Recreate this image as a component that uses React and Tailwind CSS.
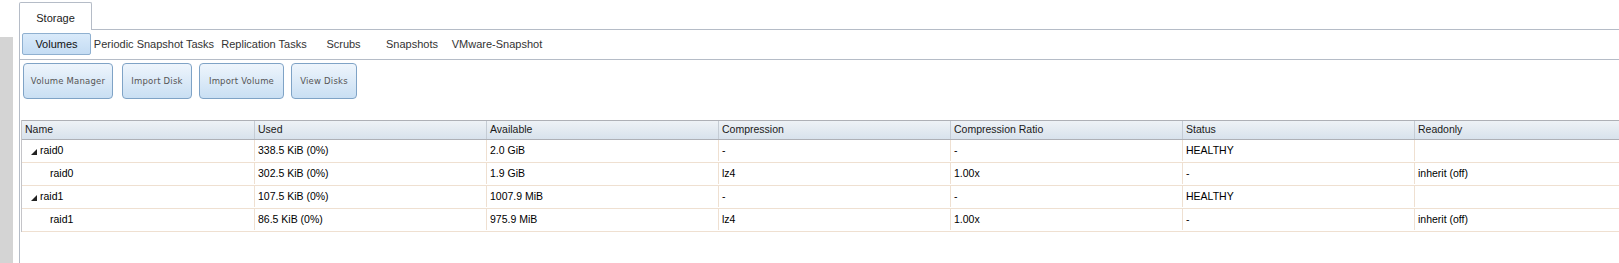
import React from 'react';

const subTabs = [
  { label: 'Volumes', w: 'w-[69px]', active: true },
  { label: 'Periodic Snapshot Tasks', w: 'w-[124px]' },
  { label: 'Replication Tasks', w: 'w-[94px]' },
  { label: 'Scrubs', w: 'w-[63px]' },
  { label: 'Snapshots', w: 'w-[72px]' },
  { label: 'VMware-Snapshot', w: 'w-[96px]' },
];

const actions = [
  { label: 'Volume Manager', w: 'w-[90px]', ml: 'ml-0' },
  { label: 'Import Disk', w: 'w-[70px]', ml: 'ml-[9px]' },
  { label: 'Import Volume', w: 'w-[85px]', ml: 'ml-[7px]' },
  { label: 'View Disks', w: 'w-[66px]', ml: 'ml-[7px]' },
];

const columns = ['Name', 'Used', 'Available', 'Compression', 'Compression Ratio', 'Status', 'Readonly'];

const volumes = [
  { name: 'raid0', child: false, used: '338.5 KiB (0%)', avail: '2.0 GiB', comp: '-', ratio: '-', status: 'HEALTHY', ro: '' },
  { name: 'raid0', child: true, used: '302.5 KiB (0%)', avail: '1.9 GiB', comp: 'lz4', ratio: '1.00x', status: '-', ro: 'inherit (off)' },
  { name: 'raid1', child: false, used: '107.5 KiB (0%)', avail: '1007.9 MiB', comp: '-', ratio: '-', status: 'HEALTHY', ro: '' },
  { name: 'raid1', child: true, used: '86.5 KiB (0%)', avail: '975.9 MiB', comp: 'lz4', ratio: '1.00x', status: '-', ro: 'inherit (off)' },
];

const Expander = () => (
  <svg width="6" height="6" viewBox="0 0 6 6" className="mr-[3px] mt-[3px]">
    <polygon points="0,6 6,6 6,0" fill="#222" />
  </svg>
);

const VolumeTable = () => (
  <div className="ml-px mt-[21px] w-[1630px] border-l border-[#c4c4c8]">
    <div className="flex h-[20px] border-y border-[#aeb0b6] bg-linear-to-b from-[#eef2f6] to-[#d8e2ec]">
      {columns.map((c, i) => (
        <div
          key={c}
          className={`flex w-[232px] shrink-0 items-center pl-[3px] ${i > 0 ? 'border-l border-[#c5ccd4]' : ''}`}
        >
          {c}
        </div>
      ))}
    </div>
    {volumes.map((v, i) => {
      const cells = [v.used, v.avail, v.comp, v.ratio, v.status, v.ro];
      return (
        <div key={i} className="flex h-[23px] border-b border-[#efe0d1] pb-px text-black">
          <div className={`flex w-[232px] shrink-0 items-center ${v.child ? 'pl-[28px]' : 'pl-[9px]'}`}>
            {!v.child && <Expander />}
            {v.name}
          </div>
          {cells.map((c, j) => (
            <div key={j} className="flex w-[232px] shrink-0 items-center border-l border-[#efe0d1] pl-[3px]">
              {c}
            </div>
          ))}
        </div>
      );
    })}
  </div>
);

export default function App() {
  return (
    <div className="flex h-[263px] w-[1619px] overflow-hidden bg-white font-['Liberation_Sans',Arial,sans-serif] text-[10.5px] text-[#1a1a1a]">
      <div className="mt-[37px] w-[13px] shrink-0 bg-[#d4d4d4]" />
      <div className="w-[6px] shrink-0" />
      <div className="flex min-w-0 flex-1 flex-col pt-[2px]">
        <div className="flex h-[28px] shrink-0">
          <div className="flex w-[73px] items-center justify-center rounded-t-[2px] border border-b-0 border-[#b5bcc7] bg-white pt-[3px] text-[11px] text-[#222]">
            Storage
          </div>
          <div className="flex-1 border-b border-[#b5bcc7]" />
        </div>
        <div className="flex flex-1 flex-col border-l border-[#b5bcc7]">
          <div className="flex h-[30px] shrink-0 items-start border-b border-[#b5bcc7] pl-[2px] pt-[3px]">
            {subTabs.map((t) => (
              <div
                key={t.label}
                className={`flex h-[22px] ${t.w} shrink-0 items-center justify-center text-[11px] ${
                  t.active
                    ? 'rounded-[2px] border border-[#8fb0d0] bg-linear-to-b from-[#d9eafa] to-[#c4dcf3] text-[#111]'
                    : 'ml-px text-[#333]'
                }`}
              >
                {t.label}
              </div>
            ))}
          </div>
          <div className="flex shrink-0 pl-[3px] pt-[3px]">
            {actions.map((a) => (
              <button
                key={a.label}
                className={`flex h-[36px] ${a.w} ${a.ml} items-center justify-center rounded-[4px] border border-[#7fa3c6] bg-linear-to-b from-[#eef5fc] to-[#c9dff3] font-['DejaVu_Sans',sans-serif] text-[8.5px] tracking-[0.2px] text-[#555]`}
              >
                {a.label}
              </button>
            ))}
          </div>
          <VolumeTable />
        </div>
      </div>
    </div>
  );
}
